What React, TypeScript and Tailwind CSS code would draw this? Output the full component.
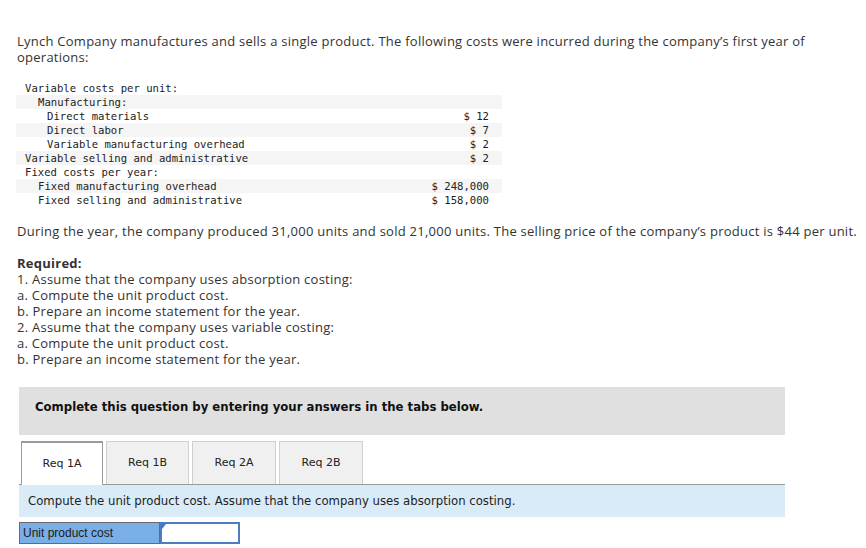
import React from "react";

const rows: { label: string; indent: string; value?: string; bg: boolean }[] = [
  { label: "Variable costs per unit:", indent: "pl-[9px]", bg: false },
  { label: "Manufacturing:", indent: "pl-[22px]", bg: true },
  { label: "Direct materials", indent: "pl-[31px]", value: "$ 12", bg: false },
  { label: "Direct labor", indent: "pl-[31px]", value: "$ 7", bg: true },
  { label: "Variable manufacturing overhead", indent: "pl-[31px]", value: "$ 2", bg: false },
  { label: "Variable selling and administrative", indent: "pl-[9px]", value: "$ 2", bg: true },
  { label: "Fixed costs per year:", indent: "pl-[9px]", bg: false },
  { label: "Fixed manufacturing overhead", indent: "pl-[22px]", value: "$ 248,000", bg: true },
  { label: "Fixed selling and administrative", indent: "pl-[22px]", value: "$ 158,000", bg: false },
];

const body = "font-['Open_Sans',sans-serif] text-[13px] leading-[16px] text-[#333] tracking-[0.25px]";

export default function App() {
  return (
    <div className="w-[866px] h-[548px] bg-white overflow-hidden pt-[33px]">
      <p className={`${body} pl-[17px] w-[830px]`}>
        Lynch Company manufactures and sells a single product. The following costs were incurred during the company’s first year of operations:
      </p>

      <div className="mt-[16px] ml-[16px] w-[486px] font-['DejaVu_Sans_Mono',monospace] text-[10.6px] leading-[14px] text-[#222]">
        {rows.map((r, i) => (
          <div key={i} className={`flex h-[14px] ${r.bg ? "bg-[#f5f5f5]" : "bg-white"}`}>
            <span className={`flex-1 whitespace-pre ${r.indent}`}>{r.label}</span>
            <span className="pr-[13px] whitespace-pre">{r.value ?? ""}</span>
          </div>
        ))}
      </div>

      <p className={`${body} mt-[16px] px-[17px] whitespace-nowrap`}>
        During the year, the company produced 31,000 units and sold 21,000 units. The selling price of the company’s product is $44 per unit.
      </p>

      <div className={`${body} mt-[16px] px-[17px]`}>
        <p className="font-bold">Required:</p>
        <p>1. Assume that the company uses absorption costing:</p>
        <p>a. Compute the unit product cost.</p>
        <p>b. Prepare an income statement for the year.</p>
        <p>2. Assume that the company uses variable costing:</p>
        <p>a. Compute the unit product cost.</p>
        <p>b. Prepare an income statement for the year.</p>
      </div>

      <div className="mt-[20px] ml-[19px] w-[766px]">
        <div className="h-[48px] bg-[#e0e0e0] flex items-center pl-[16px] pb-[8px] font-['DejaVu_Sans_Condensed','DejaVu_Sans',sans-serif] font-bold text-[13px] text-[#111]">
          Complete this question by entering your answers in the tabs below.
        </div>

        <div className="mt-[6px] flex items-end gap-[3px] pl-[2px] border-b border-[#999] font-['DejaVu_Sans',Verdana,sans-serif] text-[11px] text-[#222]">
          <div className="w-[82px] h-[44px] -mb-px flex items-center justify-center bg-white border border-b-0 border-[#9a9a9a] border-t-2">
            Req 1A
          </div>
          <div className="w-[83px] h-[43px] flex items-center justify-center bg-[#f0f0f0] border border-b-0 border-[#cfcfcf]">
            Req 1B
          </div>
          <div className="w-[84px] h-[43px] flex items-center justify-center bg-[#f0f0f0] border border-b-0 border-[#cfcfcf]">
            Req 2A
          </div>
          <div className="w-[84px] h-[43px] flex items-center justify-center bg-[#f0f0f0] border border-b-0 border-[#cfcfcf]">
            Req 2B
          </div>
        </div>

        <div className="h-[32px] bg-[#daebf8] flex items-center pl-[9px] font-['DejaVu_Sans_Condensed','DejaVu_Sans',sans-serif] text-[13px] text-[#222]">
          Compute the unit product cost. Assume that the company uses absorption costing.
        </div>

        <div className="mt-[5px] flex h-[22px]">
          <div className="w-[141px] h-full bg-[#7aaee6] border border-[#6b6b6b] flex items-center pl-[3px] font-['Liberation_Sans',Arial,sans-serif] text-[12px] text-[#1a1a1a]">
            Unit product cost
          </div>
          <div className="relative w-[80px] h-full bg-white border-2 border-[#4d7cbf]">
            <div className="absolute left-0 top-0 w-0 h-0 border-t-[5px] border-r-[4px] border-t-[#3a78d0] border-r-transparent" />
          </div>
        </div>
      </div>
    </div>
  );
}
